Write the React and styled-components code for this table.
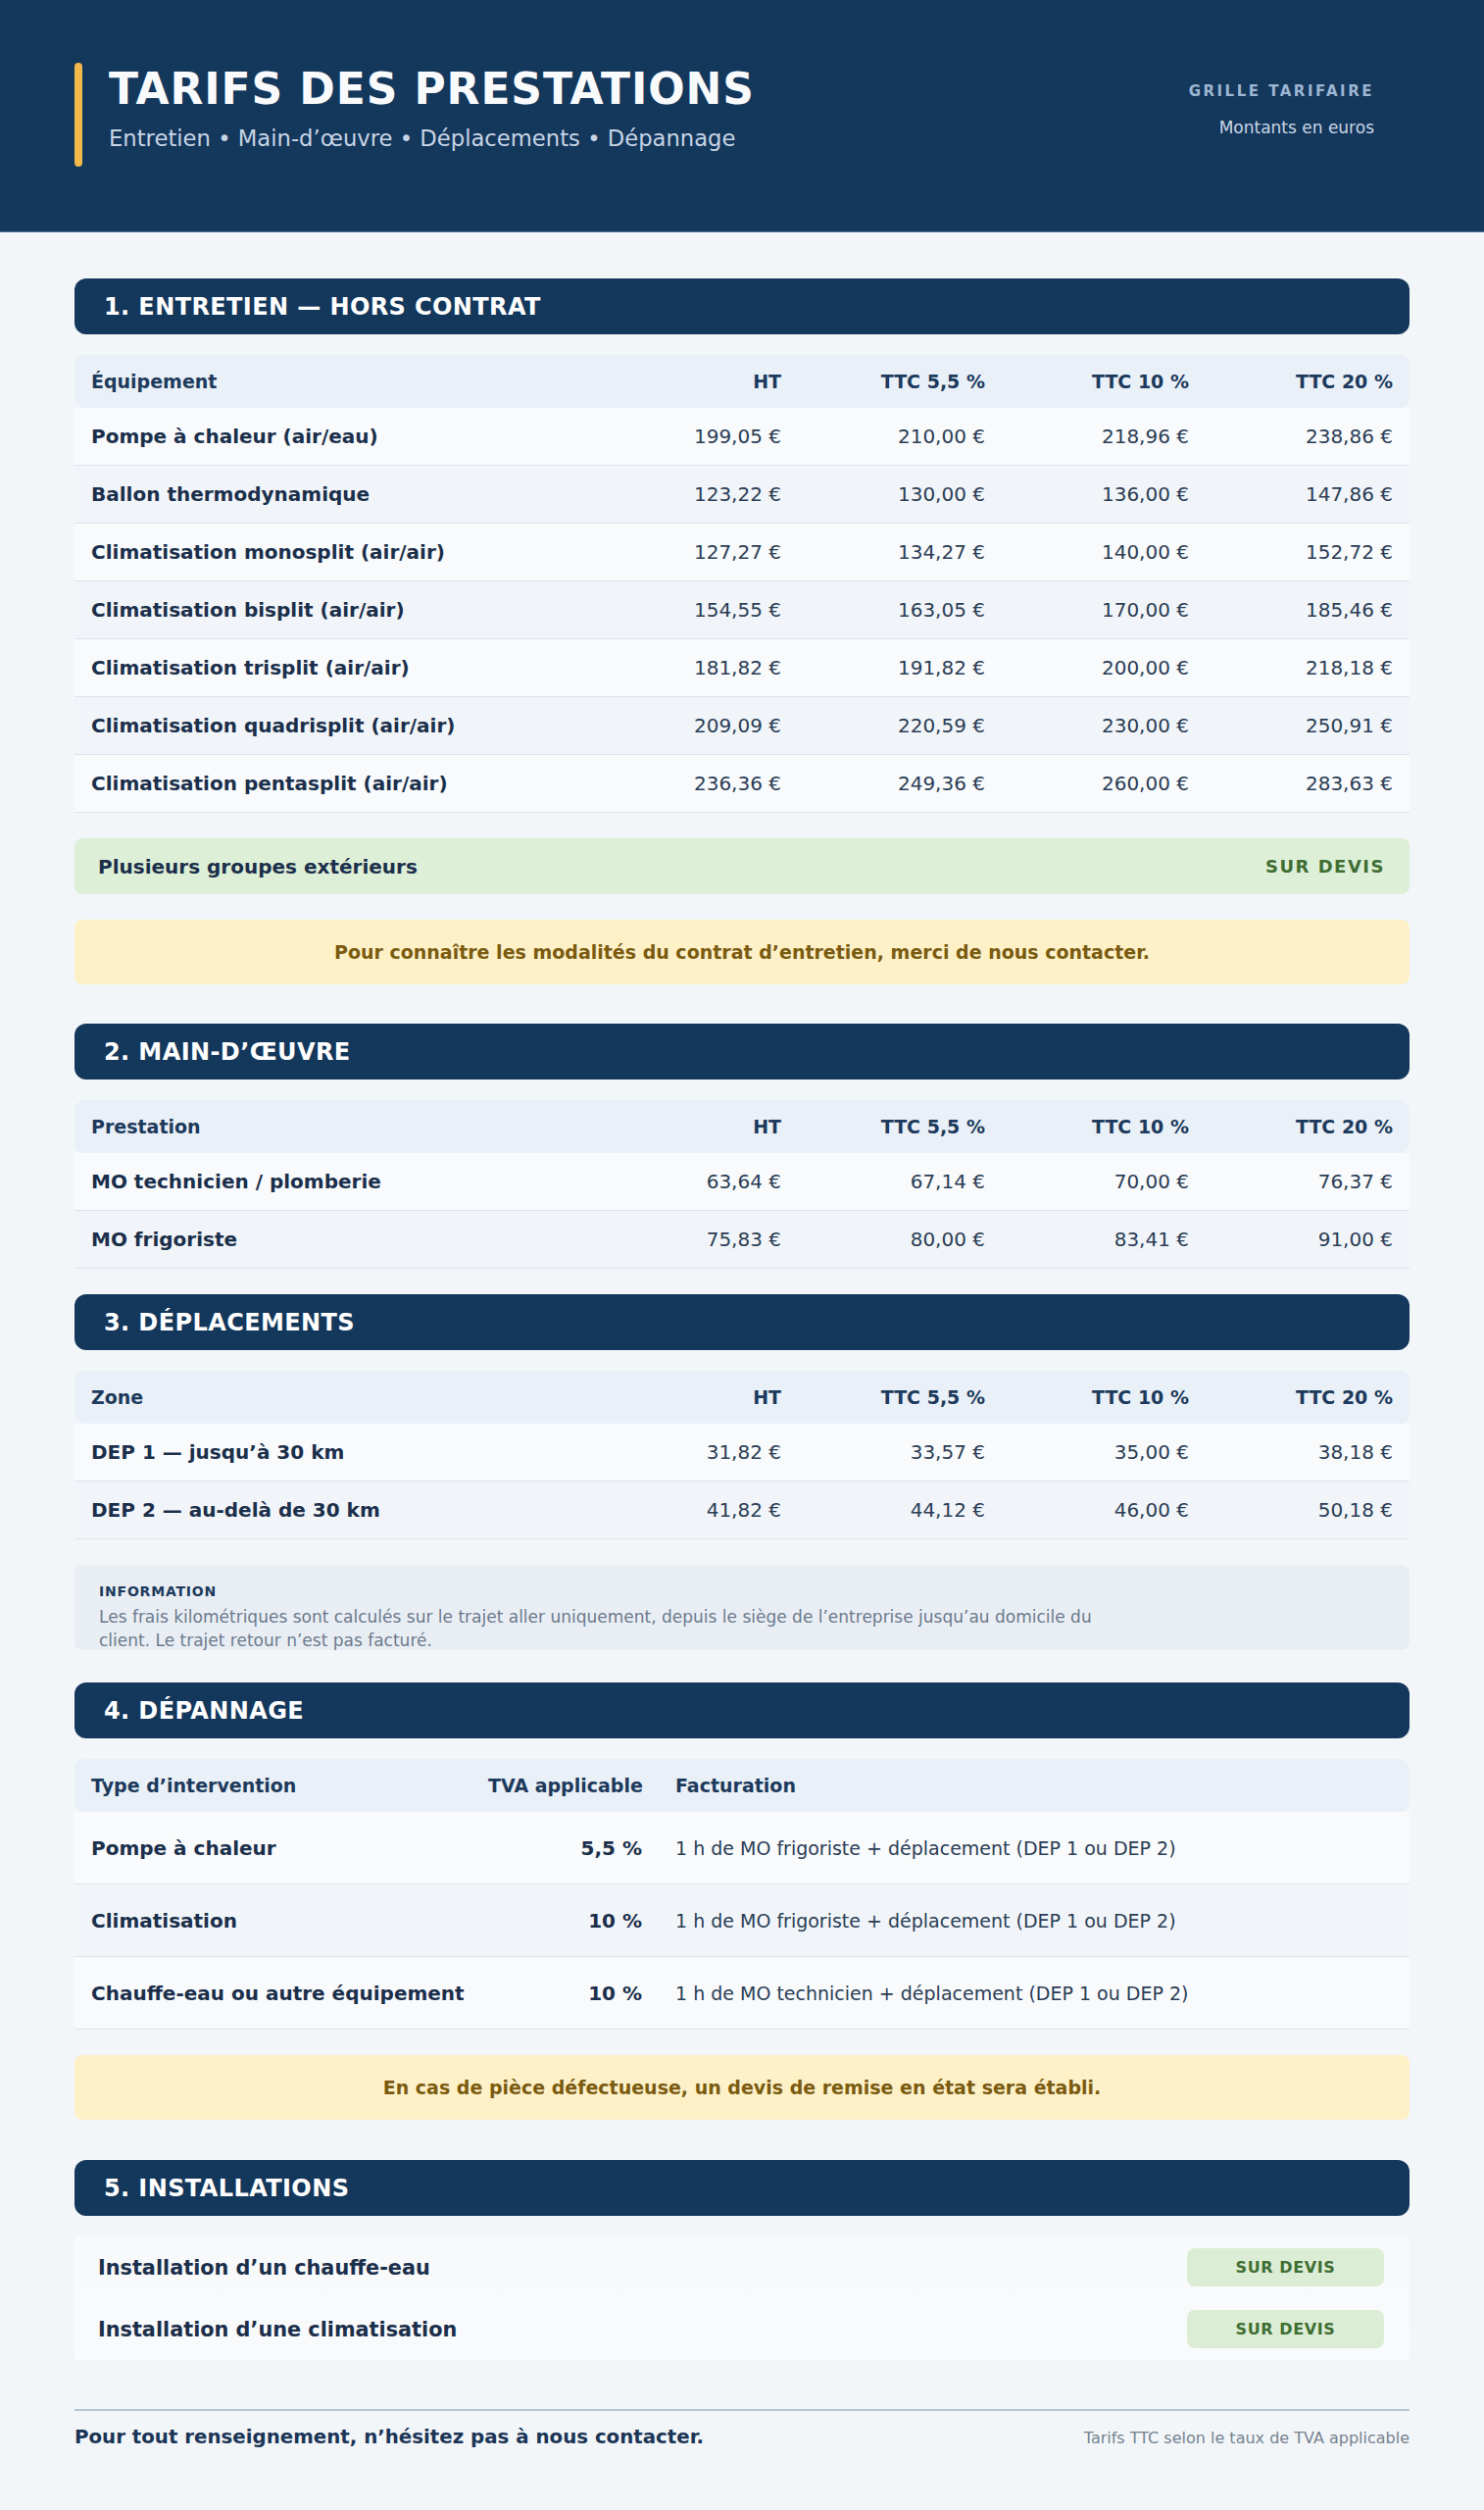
import React from "react";
import styled, { createGlobalStyle } from "styled-components";

const GlobalStyle = createGlobalStyle`
  body {
    margin: 0;
    background: #f3f6f9;
    font-family: "DejaVu Sans", Verdana, sans-serif;
    color: #1b2f4b;
  }
`;

const Page = styled.div`
  min-height: 2560px;
  background: #f3f6f9;
`;

const Header = styled.header`
  box-sizing: border-box;
  height: 237px;
  padding: 64px 112px 0 76px;
  background: #14375c;
  border-bottom: 1px solid #56779b;
  display: flex;
  justify-content: space-between;
  align-items: flex-start;
`;

const Brand = styled.div`
  display: flex;
  align-items: flex-start;
  gap: 27px;
`;

const Accent = styled.div`
  width: 8px;
  height: 106px;
  border-radius: 4px;
  background: #f2b84b;
`;

const BrandText = styled.div`
  padding-top: 1px;
`;

const Title = styled.h1`
  margin: 0;
  font-size: 44px;
  line-height: 1.2;
  font-weight: 700;
  letter-spacing: 0.9px;
  color: #f8fafc;
`;

const Subtitle = styled.p`
  margin: 8px 0 0;
  font-size: 22.7px;
  line-height: 1.4;
  color: #c6d4e4;
`;

const Meta = styled.div`
  margin-top: 19px;
  text-align: right;
`;

const MetaLabel = styled.div`
  font-size: 15px;
  line-height: 1.4;
  font-weight: 700;
  letter-spacing: 2.5px;
  color: #9db6d3;
`;

const MetaNote = styled.div`
  margin-top: 15px;
  font-size: 17px;
  line-height: 1.4;
  color: #c9d6e5;
`;

const Main = styled.main`
  padding: 47px 76px 50px;
`;

const Section = styled.section`
  margin-bottom: ${(props) => props.$after}px;
`;

const SectionBar = styled.h2`
  margin: 0;
  box-sizing: border-box;
  height: 57px;
  padding: 0 30px;
  display: flex;
  align-items: center;
  background: #14375c;
  border-radius: 12px;
  color: #ffffff;
  font-size: 24px;
  font-weight: 700;
  letter-spacing: 0.4px;
`;

const SectionBody = styled.div`
  margin-top: 21px;
  display: flex;
  flex-direction: column;
  gap: 26px;
`;

const HeadRow = styled.div`
  display: grid;
  grid-template-columns: ${(props) => props.$cols};
  height: 54px;
  align-items: center;
  background: #e9f0f7;
  border-radius: 10px;
`;

const HeadCell = styled.div`
  padding: 0 17px;
  font-size: 19px;
  font-weight: 700;
  white-space: nowrap;
  color: #1d3a5c;
  text-align: ${(props) => (props.$right ? "right" : "left")};
`;

const Rows = styled.div``;

const Row = styled.div`
  display: grid;
  grid-template-columns: ${(props) => props.$cols};
  height: ${(props) => props.$h}px;
  align-items: center;
  background: #f8fafc;
  border-bottom: 1px solid #dbe4ee;

  &:nth-child(even) {
    background: #f1f5f9;
  }
`;

const Label = styled.div`
  padding: 0 17px;
  font-size: 20px;
  font-weight: 700;
  white-space: nowrap;
  color: #1b2f4b;
`;

const Amount = styled.div`
  padding: 0 17px;
  font-size: 20px;
  white-space: nowrap;
  color: #2b3d55;
  text-align: right;
`;

const Rate = styled(Amount)`
  font-weight: 700;
  color: #1b2f4b;
`;

const Billing = styled.div`
  padding: 0 17px;
  font-size: 19px;
  white-space: nowrap;
  color: #2b3d55;
`;

const QuoteBar = styled.div`
  box-sizing: border-box;
  height: 57px;
  padding: 0 25px 0 24px;
  display: flex;
  align-items: center;
  justify-content: space-between;
  background: #ddefd6;
  border-radius: 8px;
`;

const QuoteLabel = styled.span`
  font-size: ${(props) => (props.$large ? 20.8 : 20)}px;
  font-weight: 700;
  color: #1b2f4b;
`;

const QuoteTag = styled.span`
  font-size: 18px;
  font-weight: 700;
  letter-spacing: 1.5px;
  color: #3f6e33;
`;

const Note = styled.div`
  height: 66px;
  display: flex;
  align-items: center;
  justify-content: center;
  background: #fef1c8;
  border-radius: 8px;
  font-size: 19px;
  font-weight: 700;
  color: #7a5b10;
`;

const Info = styled.div`
  box-sizing: border-box;
  height: 87px;
  padding: 18px 25px 0;
  background: #e9eef5;
  border-radius: 8px;
`;

const InfoTitle = styled.div`
  font-size: 14px;
  line-height: 18px;
  font-weight: 700;
  letter-spacing: 0.8px;
  color: #1d3a5c;
`;

const InfoText = styled.p`
  margin: 6px 0 0;
  max-width: 1040px;
  font-size: 17px;
  line-height: 23.5px;
  color: #6c7a8c;
`;

const Card = styled.div`
  background: linear-gradient(#f7f9fb, #f9fafc);
  border-radius: 4px;
`;

const CardRow = styled.div`
  height: 63px;
  padding: 0 26px 0 24px;
  display: flex;
  align-items: center;
  justify-content: space-between;
`;

const Badge = styled.span`
  width: 201px;
  height: 39px;
  display: flex;
  align-items: center;
  justify-content: center;
  background: #dcedd5;
  border-radius: 8px;
  font-size: 16px;
  font-weight: 700;
  letter-spacing: 0.6px;
  color: #3f6e33;
`;

const Footer = styled.footer`
  margin: 0 76px;
  padding-top: 13px;
  border-top: 2px solid #b8c7d7;
  display: flex;
  align-items: baseline;
  justify-content: space-between;
`;

const FooterLead = styled.span`
  font-size: 19.8px;
  line-height: 1.4;
  font-weight: 700;
  color: #1b3556;
`;

const FooterNote = styled.span`
  font-size: 16px;
  color: #75838f;
`;

const PRICE_COLS = "1fr repeat(4, 208px)";
const TVA_COLS = "405px 191px 1fr";
const RATES = ["HT", "TTC 5,5 %", "TTC 10 %", "TTC 20 %"];

const entretien = [
  ["Pompe à chaleur (air/eau)", "199,05 €", "210,00 €", "218,96 €", "238,86 €"],
  ["Ballon thermodynamique", "123,22 €", "130,00 €", "136,00 €", "147,86 €"],
  ["Climatisation monosplit (air/air)", "127,27 €", "134,27 €", "140,00 €", "152,72 €"],
  ["Climatisation bisplit (air/air)", "154,55 €", "163,05 €", "170,00 €", "185,46 €"],
  ["Climatisation trisplit (air/air)", "181,82 €", "191,82 €", "200,00 €", "218,18 €"],
  ["Climatisation quadrisplit (air/air)", "209,09 €", "220,59 €", "230,00 €", "250,91 €"],
  ["Climatisation pentasplit (air/air)", "236,36 €", "249,36 €", "260,00 €", "283,63 €"],
];

const mainOeuvre = [
  ["MO technicien / plomberie", "63,64 €", "67,14 €", "70,00 €", "76,37 €"],
  ["MO frigoriste", "75,83 €", "80,00 €", "83,41 €", "91,00 €"],
];

const deplacements = [
  ["DEP 1 — jusqu’à 30 km", "31,82 €", "33,57 €", "35,00 €", "38,18 €"],
  ["DEP 2 — au-delà de 30 km", "41,82 €", "44,12 €", "46,00 €", "50,18 €"],
];

const depannage = [
  ["Pompe à chaleur", "5,5 %", "1 h de MO frigoriste + déplacement (DEP 1 ou DEP 2)"],
  ["Climatisation", "10 %", "1 h de MO frigoriste + déplacement (DEP 1 ou DEP 2)"],
  ["Chauffe-eau ou autre équipement", "10 %", "1 h de MO technicien + déplacement (DEP 1 ou DEP 2)"],
];

const installations = [
  "Installation d’un chauffe-eau",
  "Installation d’une climatisation",
];

function PriceTable({ first, rows }) {
  return (
    <div>
      <HeadRow $cols={PRICE_COLS}>
        <HeadCell>{first}</HeadCell>
        {RATES.map((rate) => (
          <HeadCell $right key={rate}>
            {rate}
          </HeadCell>
        ))}
      </HeadRow>
      <Rows>
        {rows.map(([name, ...prices]) => (
          <Row $cols={PRICE_COLS} $h={58} key={name}>
            <Label>{name}</Label>
            {prices.map((price, index) => (
              <Amount key={index}>{price}</Amount>
            ))}
          </Row>
        ))}
      </Rows>
    </div>
  );
}

export default function App() {
  return (
    <Page>
      <GlobalStyle />
      <Header>
        <Brand>
          <Accent />
          <BrandText>
            <Title>TARIFS DES PRESTATIONS</Title>
            <Subtitle>
              Entretien • Main-d’œuvre • Déplacements • Dépannage
            </Subtitle>
          </BrandText>
        </Brand>
        <Meta>
          <MetaLabel>GRILLE TARIFAIRE</MetaLabel>
          <MetaNote>Montants en euros</MetaNote>
        </Meta>
      </Header>

      <Main>
        <Section $after={40}>
          <SectionBar>1. ENTRETIEN — HORS CONTRAT</SectionBar>
          <SectionBody>
            <PriceTable first="Équipement" rows={entretien} />
            <QuoteBar>
              <QuoteLabel>Plusieurs groupes extérieurs</QuoteLabel>
              <QuoteTag>SUR DEVIS</QuoteTag>
            </QuoteBar>
            <Note>
              Pour connaître les modalités du contrat d’entretien, merci de nous
              contacter.
            </Note>
          </SectionBody>
        </Section>

        <Section $after={26}>
          <SectionBar>2. MAIN-D’ŒUVRE</SectionBar>
          <SectionBody>
            <PriceTable first="Prestation" rows={mainOeuvre} />
          </SectionBody>
        </Section>

        <Section $after={33}>
          <SectionBar>3. DÉPLACEMENTS</SectionBar>
          <SectionBody>
            <PriceTable first="Zone" rows={deplacements} />
            <Info>
              <InfoTitle>INFORMATION</InfoTitle>
              <InfoText>
                Les frais kilométriques sont calculés sur le trajet aller
                uniquement, depuis le siège de l’entreprise jusqu’au domicile du
                client. Le trajet retour n’est pas facturé.
              </InfoText>
            </Info>
          </SectionBody>
        </Section>

        <Section $after={41}>
          <SectionBar>4. DÉPANNAGE</SectionBar>
          <SectionBody>
            <div>
              <HeadRow $cols={TVA_COLS}>
                <HeadCell>Type d’intervention</HeadCell>
                <HeadCell $right>TVA applicable</HeadCell>
                <HeadCell>Facturation</HeadCell>
              </HeadRow>
              <Rows>
                {depannage.map(([type, rate, billing]) => (
                  <Row $cols={TVA_COLS} $h={73} key={type}>
                    <Label>{type}</Label>
                    <Rate>{rate}</Rate>
                    <Billing>{billing}</Billing>
                  </Row>
                ))}
              </Rows>
            </div>
            <Note>
              En cas de pièce défectueuse, un devis de remise en état sera
              établi.
            </Note>
          </SectionBody>
        </Section>

        <Section $after={0}>
          <SectionBar>5. INSTALLATIONS</SectionBar>
          <SectionBody>
            <Card>
              {installations.map((item) => (
                <CardRow key={item}>
                  <QuoteLabel $large>{item}</QuoteLabel>
                  <Badge>SUR DEVIS</Badge>
                </CardRow>
              ))}
            </Card>
          </SectionBody>
        </Section>
      </Main>

      <Footer>
        <FooterLead>
          Pour tout renseignement, n’hésitez pas à nous contacter.
        </FooterLead>
        <FooterNote>Tarifs TTC selon le taux de TVA applicable</FooterNote>
      </Footer>
    </Page>
  );
}
